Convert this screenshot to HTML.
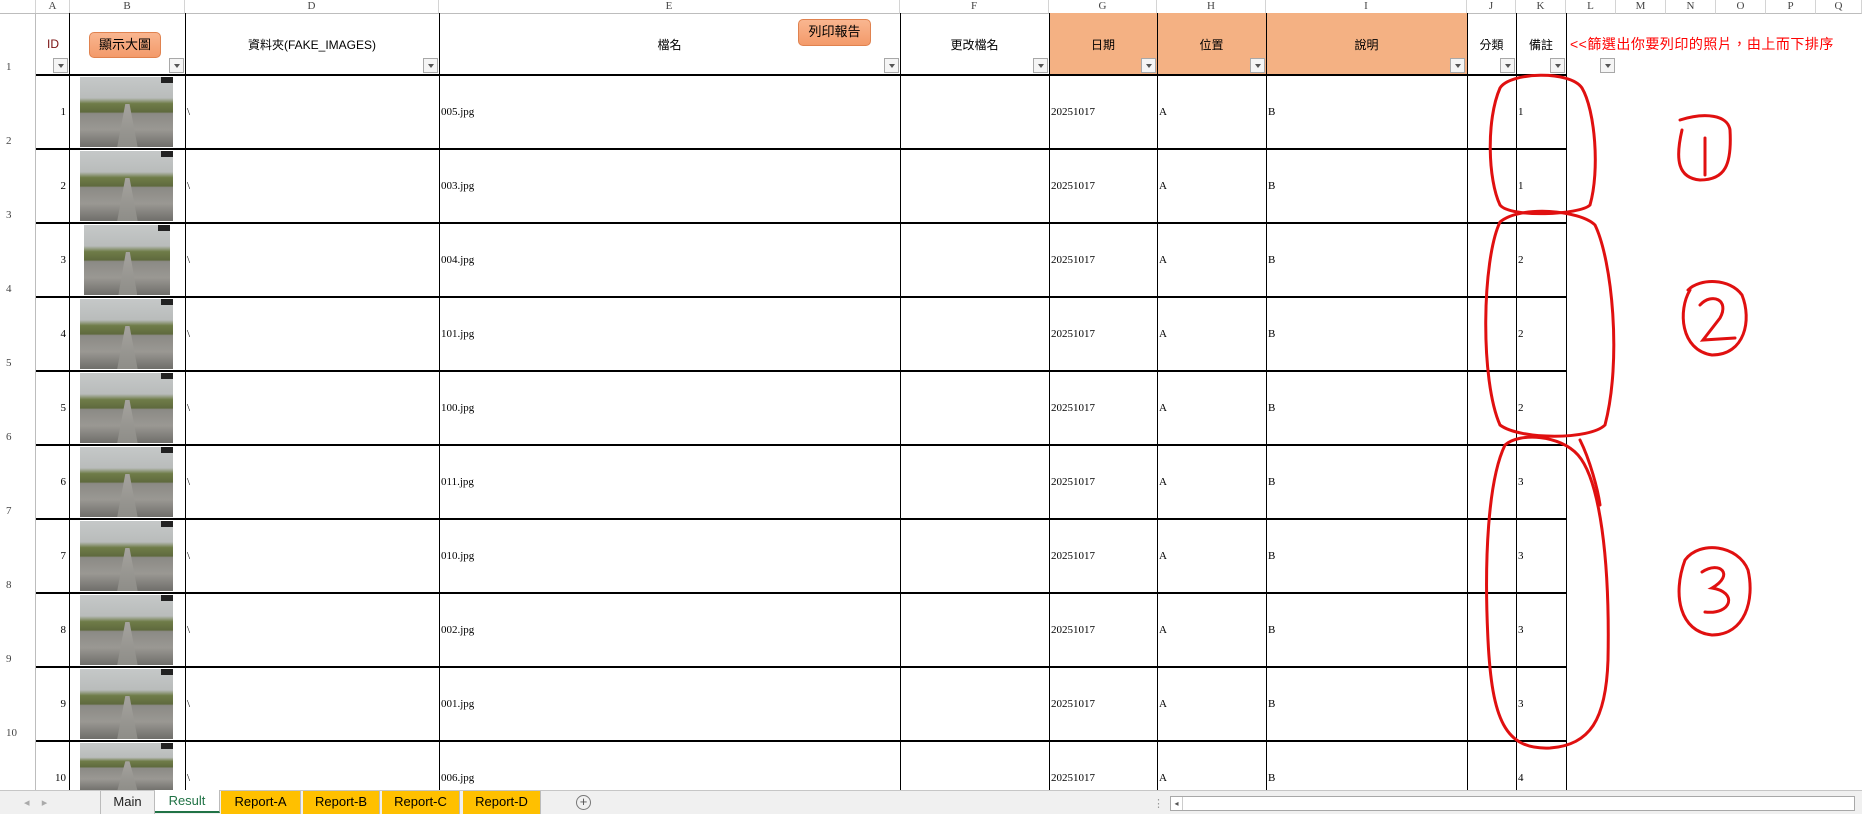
<!DOCTYPE html>
<html><head><meta charset="utf-8"><style>
*{box-sizing:border-box;margin:0;padding:0}
body{width:1862px;height:814px;overflow:hidden;background:#fff;position:relative;font-family:"Liberation Serif","Noto Serif CJK SC",serif;font-size:11px;color:#000}
.a{position:absolute}
.colh{position:absolute;top:0;height:14px;background:#fff;border-bottom:1px solid #bdbdbd;border-right:1px solid #d4d4d4;text-align:center;font-size:11px;line-height:13px;color:#444}
.vl{position:absolute;top:13px;width:1px;background:#000;height:777px}
.hl{position:absolute;left:36px;width:1530px;height:2px;background:#000}
.rh{position:absolute;left:0;width:36px;border-right:1px solid #bdbdbd;font-size:11px;color:#444;padding-left:6px}
.hd{position:absolute;top:13px;height:62px;display:flex;align-items:center;justify-content:center;font-family:"Liberation Sans","Noto Sans CJK TC",sans-serif;font-size:12px}
.dd{position:absolute;width:15px;height:15px;border:1px solid #a8a8a8;background:#f5f5f5}
.dd:after{content:"";position:absolute;left:4px;top:5px;border-left:3px solid transparent;border-right:3px solid transparent;border-top:4px solid #555}
.t{position:absolute;font-size:11px;line-height:12px}
.ph{position:absolute;left:80px;width:93px;height:70px;background:linear-gradient(180deg,#c5c8c8 0%,#b9bcbb 30%,#6f7c48 38%,#5f6a3e 50%,#8b8a85 52%,#9a9893 75%,#6f6e6a 100%)}
.ph:before{content:"";position:absolute;right:0;top:0;width:12px;height:6px;background:#222}
.ph:after{content:"";position:absolute;left:40%;top:38%;width:22%;height:62%;background:linear-gradient(180deg,#a5a39e,#8e8d88);clip-path:polygon(40% 0,60% 0,100% 100%,0 100%)}
.tab{position:absolute;top:791px;height:23px;font-family:"Liberation Sans",sans-serif;font-size:13px;line-height:22px;text-align:center;border-right:1px solid #bbb}
</style></head><body>
<!-- column headers -->
<div class="colh" style="left:0;width:36px"></div>
<div class="colh" style="left:36px;width:34px">A</div>
<div class="colh" style="left:70px;width:115px">B</div>
<div class="colh" style="left:185px;width:254px">D</div>
<div class="colh" style="left:439px;width:461px">E</div>
<div class="colh" style="left:900px;width:149px">F</div>
<div class="colh" style="left:1049px;width:108px">G</div>
<div class="colh" style="left:1157px;width:109px">H</div>
<div class="colh" style="left:1266px;width:201px">I</div>
<div class="colh" style="left:1467px;width:49px">J</div>
<div class="colh" style="left:1516px;width:50px">K</div>
<div class="colh" style="left:1566px;width:50px">L</div>
<div class="colh" style="left:1616px;width:50px">M</div>
<div class="colh" style="left:1666px;width:50px">N</div>
<div class="colh" style="left:1716px;width:50px">O</div>
<div class="colh" style="left:1766px;width:50px">P</div>
<div class="colh" style="left:1816px;width:46px">Q</div>
<!-- header fills -->
<div class="a" style="left:1049px;top:13px;width:418px;height:62px;background:#f4b183"></div>
<!-- header texts -->
<div class="hd" style="left:36px;width:34px;color:#7a1010">ID</div>
<div class="hd" style="left:185px;width:254px">資料夾(FAKE_IMAGES)</div>
<div class="hd" style="left:439px;width:461px">檔名</div>
<div class="hd" style="left:900px;width:149px">更改檔名</div>
<div class="hd" style="left:1049px;width:108px">日期</div>
<div class="hd" style="left:1157px;width:109px">位置</div>
<div class="hd" style="left:1266px;width:201px">說明</div>
<div class="hd" style="left:1467px;width:49px">分類</div>
<div class="hd" style="left:1516px;width:50px">備註</div>
<div class="hd" style="left:1570px;width:290px;justify-content:flex-start;color:#f00;font-size:14px;letter-spacing:.5px">&lt;&lt;篩選出你要列印的照片，由上而下排序</div>
<!-- buttons -->
<div class="a" style="left:89px;top:32px;width:72px;height:26px;border:1px solid #e0824f;border-radius:5px;background:linear-gradient(#f9b690,#f39a6a);font-family:'Liberation Sans','Noto Sans CJK TC',sans-serif;font-size:13px;line-height:24px;text-align:center">顯示大圖</div>
<div class="a" style="left:798px;top:19px;width:73px;height:27px;border:1px solid #e0824f;border-radius:5px;background:linear-gradient(#f9b690,#f39a6a);font-family:'Liberation Sans','Noto Sans CJK TC',sans-serif;font-size:13px;line-height:24px;text-align:center">列印報告</div>
<!-- dropdowns -->
<div class="dd" style="left:53px;top:58px"></div>
<div class="dd" style="left:169px;top:58px"></div>
<div class="dd" style="left:423px;top:58px"></div>
<div class="dd" style="left:884px;top:58px"></div>
<div class="dd" style="left:1033px;top:58px"></div>
<div class="dd" style="left:1141px;top:58px"></div>
<div class="dd" style="left:1250px;top:58px"></div>
<div class="dd" style="left:1450px;top:58px"></div>
<div class="dd" style="left:1500px;top:58px"></div>
<div class="dd" style="left:1550px;top:58px"></div>
<div class="dd" style="left:1600px;top:58px"></div>
<!-- vertical lines -->
<div class="vl" style="left:69px"></div>
<div class="vl" style="left:185px"></div>
<div class="vl" style="left:439px"></div>
<div class="vl" style="left:900px"></div>
<div class="vl" style="left:1049px"></div>
<div class="vl" style="left:1157px"></div>
<div class="vl" style="left:1266px"></div>
<div class="vl" style="left:1467px"></div>
<div class="vl" style="left:1516px"></div>
<div class="vl" style="left:1566px"></div>
<!-- horizontal lines -->
<div class="hl" style="top:74px"></div>
<div class="hl" style="top:148px"></div>
<div class="hl" style="top:222px"></div>
<div class="hl" style="top:296px"></div>
<div class="hl" style="top:370px"></div>
<div class="hl" style="top:444px"></div>
<div class="hl" style="top:518px"></div>
<div class="hl" style="top:592px"></div>
<div class="hl" style="top:666px"></div>
<div class="hl" style="top:740px"></div>
<!-- row headers -->
<div class="rh" style="top:13px;height:62px;padding-top:48px">1</div>
<div class="rh" style="top:75px;height:74px;padding-top:60px">2</div>
<div class="rh" style="top:149px;height:74px;padding-top:60px">3</div>
<div class="rh" style="top:223px;height:74px;padding-top:60px">4</div>
<div class="rh" style="top:297px;height:74px;padding-top:60px">5</div>
<div class="rh" style="top:371px;height:74px;padding-top:60px">6</div>
<div class="rh" style="top:445px;height:74px;padding-top:60px">7</div>
<div class="rh" style="top:519px;height:74px;padding-top:60px">8</div>
<div class="rh" style="top:593px;height:74px;padding-top:60px">9</div>
<div class="rh" style="top:667px;height:74px;padding-top:60px">10</div>
<div class="rh" style="top:741px;height:50px"></div>
<!-- photos -->
<div class="ph" style="top:77px"></div>
<div class="ph" style="top:151px"></div>
<div class="ph" style="top:225px;left:84px;width:86px"></div>
<div class="ph" style="top:299px"></div>
<div class="ph" style="top:373px"></div>
<div class="ph" style="top:447px"></div>
<div class="ph" style="top:521px"></div>
<div class="ph" style="top:595px"></div>
<div class="ph" style="top:669px"></div>
<div class="ph" style="top:743px;height:48px"></div>
<!-- data rows -->
<div class="t" style="left:40px;width:26px;text-align:right;top:106px">1</div><div class="t" style="left:187px;top:106px">\</div><div class="t" style="left:441px;top:106px">005.jpg</div><div class="t" style="left:1051px;top:106px">20251017</div><div class="t" style="left:1159px;top:106px">A</div><div class="t" style="left:1268px;top:106px">B</div><div class="t" style="left:1518px;top:106px">1</div>
<div class="t" style="left:40px;width:26px;text-align:right;top:180px">2</div><div class="t" style="left:187px;top:180px">\</div><div class="t" style="left:441px;top:180px">003.jpg</div><div class="t" style="left:1051px;top:180px">20251017</div><div class="t" style="left:1159px;top:180px">A</div><div class="t" style="left:1268px;top:180px">B</div><div class="t" style="left:1518px;top:180px">1</div>
<div class="t" style="left:40px;width:26px;text-align:right;top:254px">3</div><div class="t" style="left:187px;top:254px">\</div><div class="t" style="left:441px;top:254px">004.jpg</div><div class="t" style="left:1051px;top:254px">20251017</div><div class="t" style="left:1159px;top:254px">A</div><div class="t" style="left:1268px;top:254px">B</div><div class="t" style="left:1518px;top:254px">2</div>
<div class="t" style="left:40px;width:26px;text-align:right;top:328px">4</div><div class="t" style="left:187px;top:328px">\</div><div class="t" style="left:441px;top:328px">101.jpg</div><div class="t" style="left:1051px;top:328px">20251017</div><div class="t" style="left:1159px;top:328px">A</div><div class="t" style="left:1268px;top:328px">B</div><div class="t" style="left:1518px;top:328px">2</div>
<div class="t" style="left:40px;width:26px;text-align:right;top:402px">5</div><div class="t" style="left:187px;top:402px">\</div><div class="t" style="left:441px;top:402px">100.jpg</div><div class="t" style="left:1051px;top:402px">20251017</div><div class="t" style="left:1159px;top:402px">A</div><div class="t" style="left:1268px;top:402px">B</div><div class="t" style="left:1518px;top:402px">2</div>
<div class="t" style="left:40px;width:26px;text-align:right;top:476px">6</div><div class="t" style="left:187px;top:476px">\</div><div class="t" style="left:441px;top:476px">011.jpg</div><div class="t" style="left:1051px;top:476px">20251017</div><div class="t" style="left:1159px;top:476px">A</div><div class="t" style="left:1268px;top:476px">B</div><div class="t" style="left:1518px;top:476px">3</div>
<div class="t" style="left:40px;width:26px;text-align:right;top:550px">7</div><div class="t" style="left:187px;top:550px">\</div><div class="t" style="left:441px;top:550px">010.jpg</div><div class="t" style="left:1051px;top:550px">20251017</div><div class="t" style="left:1159px;top:550px">A</div><div class="t" style="left:1268px;top:550px">B</div><div class="t" style="left:1518px;top:550px">3</div>
<div class="t" style="left:40px;width:26px;text-align:right;top:624px">8</div><div class="t" style="left:187px;top:624px">\</div><div class="t" style="left:441px;top:624px">002.jpg</div><div class="t" style="left:1051px;top:624px">20251017</div><div class="t" style="left:1159px;top:624px">A</div><div class="t" style="left:1268px;top:624px">B</div><div class="t" style="left:1518px;top:624px">3</div>
<div class="t" style="left:40px;width:26px;text-align:right;top:698px">9</div><div class="t" style="left:187px;top:698px">\</div><div class="t" style="left:441px;top:698px">001.jpg</div><div class="t" style="left:1051px;top:698px">20251017</div><div class="t" style="left:1159px;top:698px">A</div><div class="t" style="left:1268px;top:698px">B</div><div class="t" style="left:1518px;top:698px">3</div>
<div class="t" style="left:40px;width:26px;text-align:right;top:772px">10</div><div class="t" style="left:187px;top:772px">\</div><div class="t" style="left:441px;top:772px">006.jpg</div><div class="t" style="left:1051px;top:772px">20251017</div><div class="t" style="left:1159px;top:772px">A</div><div class="t" style="left:1268px;top:772px">B</div><div class="t" style="left:1518px;top:772px">4</div>
<!-- red annotations -->
<svg class="a" style="left:0;top:0" width="1862" height="814" fill="none" stroke="#e01010" stroke-width="3" stroke-linecap="round">
<path d="M1500 88 C1510 72 1570 70 1582 88 C1595 110 1600 170 1590 205 C1580 215 1510 218 1500 205 C1488 180 1486 120 1500 88 Z"/>
<path d="M1500 222 C1520 205 1580 210 1595 225 C1612 260 1622 360 1605 425 C1590 440 1520 440 1500 425 C1480 380 1482 260 1500 222 Z"/>
<path d="M1505 445 C1520 432 1560 435 1578 455 C1600 480 1610 560 1608 660 C1606 720 1590 745 1550 748 C1505 750 1492 720 1488 640 C1484 560 1488 480 1505 445 Z"/>
<path d="M1580 440 C1590 460 1598 490 1600 505"/>
<path d="M1682 130 C1675 160 1678 178 1700 180 C1725 180 1732 165 1730 130 C1728 115 1705 112 1680 120"/>
<path d="M1705 138 L1705 175"/>
<path d="M1690 290 C1678 310 1680 350 1712 355 C1745 355 1752 320 1742 295 C1730 278 1700 278 1688 290"/>
<path d="M1700 305 C1712 292 1730 300 1720 318 L1703 340 L1735 338"/>
<path d="M1685 560 C1672 595 1680 632 1712 635 C1745 635 1755 600 1748 570 C1738 545 1700 540 1685 560"/>
<path d="M1702 572 C1720 560 1735 575 1712 588 C1738 592 1732 615 1705 612"/>
</svg>
<!-- tab bar -->
<div class="a" style="left:0;top:790px;width:1862px;height:24px;background:#f0f0f0;border-top:1px solid #c6c6c6"></div>
<div class="a" style="left:24px;top:796px;color:#aaa;font-family:'Liberation Sans',sans-serif;font-size:11px">◂&nbsp;&nbsp;&nbsp;&nbsp;▸</div>
<div class="tab" style="left:100px;width:55px;color:#222;border-left:1px solid #bbb">Main</div>
<div class="tab" style="left:155px;width:65px;background:#fff;color:#217346;border-bottom:2px solid #217346;top:790px">Result</div>
<div class="tab" style="left:221px;width:80px;background:#ffc000">Report-A</div>
<div class="tab" style="left:303px;width:77px;background:#ffc000">Report-B</div>
<div class="tab" style="left:382px;width:78px;background:#ffc000">Report-C</div>
<div class="tab" style="left:463px;width:78px;background:#ffc000">Report-D</div>
<div class="a" style="left:576px;top:795px;width:15px;height:15px;border:1px solid #777;border-radius:50%;text-align:center;line-height:12px;font-family:'Liberation Sans',sans-serif;font-size:13px;color:#555">+</div>
<div class="a" style="left:1153px;top:797px;color:#999;font-size:11px">⋮</div>
<div class="a" style="left:1170px;top:796px;width:685px;height:15px;border:1px solid #a8a8a8;background:#fff"></div>
<div class="a" style="left:1171px;top:797px;width:12px;height:13px;border-right:1px solid #ccc;font-size:8px;color:#555;text-align:center;line-height:13px">◂</div>
</body></html>
